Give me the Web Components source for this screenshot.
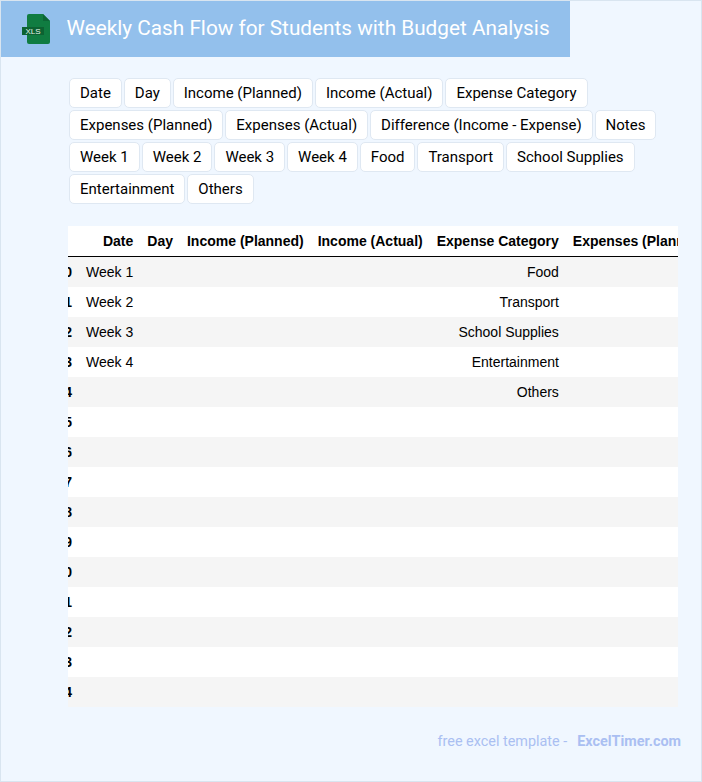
<!DOCTYPE html>
<html>
<head>
<meta charset="utf-8">
<title>Weekly Cash Flow for Students with Budget Analysis</title>
<style>
  html, body { margin: 0; padding: 0; }
  body { width: 702px; height: 782px; overflow: hidden; }
</style>
</head>
<body>
<sheet-page>
  <sheet-header title-text="Weekly Cash Flow for Students with Budget Analysis"></sheet-header>
  <chip-list></chip-list>
  <data-table></data-table>
  <sheet-footer></sheet-footer>
</sheet-page>

<script>
const COLUMNS = ['Date', 'Day', 'Income (Planned)', 'Income (Actual)', 'Expense Category',
    'Expenses (Planned)', 'Expenses (Actual)', 'Difference (Income - Expense)', 'Notes'];
const CHIPS = COLUMNS.concat(['Week 1', 'Week 2', 'Week 3', 'Week 4', 'Food', 'Transport',
    'School Supplies', 'Entertainment', 'Others']);
const WEEKS = ['Week 1', 'Week 2', 'Week 3', 'Week 4'];
const CATEGORIES = ['Food', 'Transport', 'School Supplies', 'Entertainment', 'Others'];

class SheetPage extends HTMLElement {
    constructor() {
        super();
        this.attachShadow({ mode: 'open' });
        this.shadowRoot.innerHTML = `
            <style>
                :host {
                    display: flex;
                    flex-direction: column;
                    box-sizing: border-box;
                    width: 702px;
                    height: 782px;
                    background: #f0f7ff;
                    border: 1px solid #d9e5f0;
                    font-family: Roboto, sans-serif;
                    overflow: hidden;
                }
            </style>
            <slot></slot>
        `;
    }
}
customElements.define('sheet-page', SheetPage);

class SheetHeader extends HTMLElement {
    constructor() {
        super();
        this.attachShadow({ mode: 'open' });
    }

    connectedCallback() {
        const title = this.getAttribute('title-text') || '';
        this.shadowRoot.innerHTML = `
            <style>
                :host {
                    display: flex;
                    align-items: center;
                    box-sizing: border-box;
                    width: 569px;
                    height: 56px;
                    padding-left: 21px;
                    background: #93c0ec;
                    flex: none;
                }
                svg { flex: none; margin-right: 15.6px; }
                h1 {
                    margin: -2px 0 0;
                    color: #fff;
                    font-size: 20.77px;
                    font-weight: 400;
                    white-space: nowrap;
                }
            </style>
            <svg width="29" height="32" viewBox="0 0 29 32">
                <path d="M7 1h14l7 7v21a2 2 0 0 1-2 2H7a2 2 0 0 1-2-2V3a2 2 0 0 1 2-2z" fill="#107c41"/>
                <path d="M21 1l7 7h-7z" fill="#0c6636"/>
                <rect x="0" y="14" width="22" height="8" fill="#0c6232"/>
                <text x="11" y="21" text-anchor="middle" fill="#e6f4ea"
                      font-family="'Liberation Sans', sans-serif" font-size="8">XLS</text>
            </svg>
            <h1>${title}</h1>
        `;
    }
}
customElements.define('sheet-header', SheetHeader);

class ChipList extends HTMLElement {
    constructor() {
        super();
        this.attachShadow({ mode: 'open' });
        const chips = CHIPS.map(c => `<span class="chip">${c}</span>`).join('');
        this.shadowRoot.innerHTML = `
            <style>
                :host {
                    display: flex;
                    flex-wrap: wrap;
                    gap: 2px 1.94px;
                    width: 612px;
                    margin: 21px 0 0 68px;
                    flex: none;
                }
                .chip {
                    box-sizing: border-box;
                    height: 30px;
                    line-height: 28px;
                    padding: 0 10px;
                    background: #fff;
                    border: 1px solid #dfe8f2;
                    border-radius: 5px;
                    color: #000;
                    font-size: 15px;
                    white-space: nowrap;
                }
            </style>
            ${chips}
        `;
    }
}
customElements.define('chip-list', ChipList);

class DataTable extends HTMLElement {
    constructor() {
        super();
        this.attachShadow({ mode: 'open' });
        const head = COLUMNS.map(c => `<th>${c}</th>`).join('');
        let rows = '';
        for (let i = 0; i < 15; i++) {
            const cells = COLUMNS.map(c => {
                if (c === 'Date') return `<td>${WEEKS[i] || ''}</td>`;
                if (c === 'Expense Category') return `<td>${CATEGORIES[i] || ''}</td>`;
                return '<td></td>';
            }).join('');
            rows += `<tr><th>${i}</th>${cells}</tr>`;
        }
        this.shadowRoot.innerHTML = `
            <style>
                :host {
                    display: block;
                    width: 610px;
                    margin: 22px 0 0 67px;
                    overflow: hidden;
                    background: #fff;
                    flex: none;
                }
                table {
                    border-collapse: separate;
                    border-spacing: 0;
                    margin-left: -18.5px;
                    font-family: "Liberation Sans", Arial, sans-serif;
                    font-size: 14px;
                    color: #000;
                    white-space: nowrap;
                }
                th, td {
                    box-sizing: border-box;
                    height: 30px;
                    padding: 0 7px;
                    text-align: right;
                }
                th { font-weight: 700; }
                thead th {
                    height: 31px;
                    border-bottom: 1px solid #000;
                }
                tbody tr:nth-child(odd) { background: #f5f5f5; }
            </style>
            <table>
                <thead><tr><th></th>${head}</tr></thead>
                <tbody>${rows}</tbody>
            </table>
        `;
    }
}
customElements.define('data-table', DataTable);

class SheetFooter extends HTMLElement {
    constructor() {
        super();
        this.attachShadow({ mode: 'open' });
        this.shadowRoot.innerHTML = `
            <style>
                :host {
                    display: flex;
                    justify-content: flex-end;
                    align-items: baseline;
                    width: 680px;
                    margin-top: 26px;
                    font-size: 14.4px;
                    color: #aabff2;
                    flex: none;
                }
                b { margin-left: 10px; font-weight: 700; }
            </style>
            <span>free excel template -</span><b>ExcelTimer.com</b>
        `;
    }
}
customElements.define('sheet-footer', SheetFooter);
</script>
</body>
</html>
